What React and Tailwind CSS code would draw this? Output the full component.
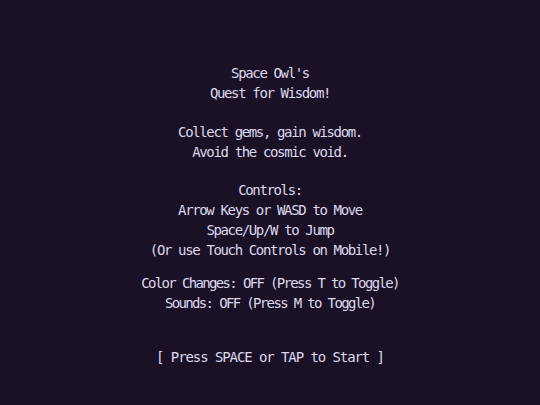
export default function App() {
  const font = { fontFamily: '"DejaVu Sans Mono", "Liberation Mono", monospace' };
  return (
    <div
      className="w-full h-[405px] bg-[#1b1127] text-[#dcd8ec] text-[14px] leading-[20px] tracking-[-1.36px] flex flex-col items-center text-center pt-[63px] whitespace-pre"
      style={font}
    >
      <div>
        <div>Space Owl's</div>
        <div>Quest for Wisdom!</div>
      </div>
      <div className="mt-[19px]">
        <div>Collect gems, gain wisdom.</div>
        <div>Avoid the cosmic void.</div>
      </div>
      <div className="mt-[18px]">
        <div>Controls:</div>
        <div>Arrow Keys or WASD to Move</div>
        <div>Space/Up/W to Jump</div>
        <div>(Or use Touch Controls on Mobile!)</div>
      </div>
      <div className="mt-[13px] tracking-[-1.65px]">
        <div>Color Changes: OFF (Press T to Toggle)</div>
        <div>Sounds: OFF (Press M to Toggle)</div>
      </div>
      <div className="mt-[34px] tracking-[-1.08px]">
        <div>[ Press SPACE or TAP to Start ]</div>
      </div>
    </div>
  );
}
